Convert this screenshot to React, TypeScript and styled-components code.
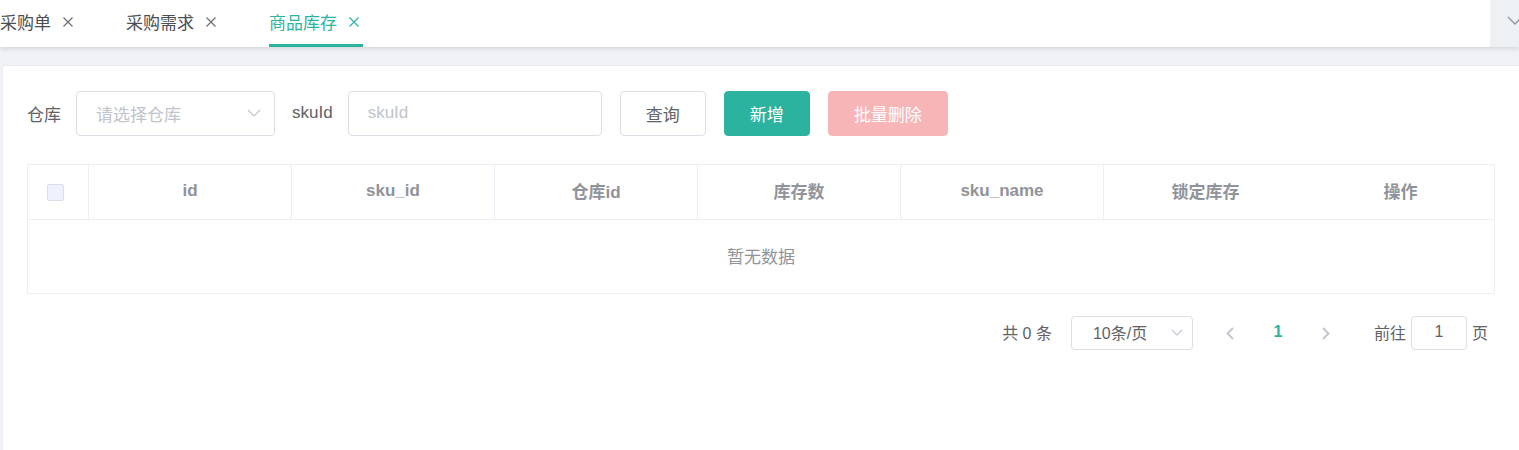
import React from "react";
import styled, { createGlobalStyle, css } from "styled-components";

const TEAL = "#2bb3a0";

const GlobalStyle = createGlobalStyle`
  html, body {
    margin: 0;
    padding: 0;
    height: 100%;
    overflow: hidden;
  }
  body {
    font-family: "Liberation Sans", "Noto Sans CJK SC", sans-serif;
    color: #606266;
    background: #f0f2f5;
  }
  #root { height: 100%; }
  * { box-sizing: border-box; }
`;

const Page = styled.div`
  height: 100vh;
  display: flex;
  flex-direction: column;
  background: #f0f2f5;
`;

const TabBar = styled.div`
  height: 47px;
  flex: none;
  display: flex;
  background: #fff;
  box-shadow: 0 2px 5px rgba(0, 0, 0, 0.12);
  position: relative;
  z-index: 1;
`;

const TabList = styled.div`
  flex: 1;
  display: flex;
  overflow: hidden;
`;

const Tab = styled.div<{ $active?: boolean }>`
  position: relative;
  height: 47px;
  display: flex;
  align-items: center;
  gap: 10px;
  padding: 0 2px 4px 0;
  margin-right: 49px;
  font-size: 17px;
  white-space: nowrap;
  color: ${(p) => (p.$active ? TEAL : "#4a4d52")};
  ${(p) =>
    p.$active &&
    css`
      &::after {
        content: "";
        position: absolute;
        left: 0;
        right: 0;
        bottom: 0;
        height: 3px;
        background: ${TEAL};
      }
    `}
`;

const CloseBox = styled.span`
  width: 14px;
  height: 14px;
  display: flex;
  align-items: center;
  padding-left: 2px;
`;

const DropButton = styled.div`
  width: 29px;
  flex: none;
  height: 47px;
  background: #eef1f3;
  overflow: hidden;
  display: flex;
  align-items: center;
  padding: 0 0 6px 17px;
  & svg { flex: none; }
`;

const Main = styled.div`
  flex: 1;
  padding: 18px 0 0 2px;
  display: flex;
  min-height: 0;
`;

const Card = styled.div`
  flex: 1;
  background: #fff;
  border: 1px solid #e9ecf1;
  border-right: none;
  border-bottom: none;
  border-radius: 4px 0 0 0;
  padding: 25px 24px 0 24px;
`;

const Form = styled.div`
  display: flex;
  align-items: center;
  height: 45px;
`;

const Label = styled.span`
  font-size: 17px;
  color: #606266;
  margin-right: 15px;
  padding-bottom: 1px;
  white-space: nowrap;
`;

const Field = styled.div<{ $width: number; $gapRight: number }>`
  width: ${(p) => p.$width}px;
  height: 45px;
  border: 1px solid #dcdfe6;
  border-radius: 4px;
  display: flex;
  align-items: center;
  justify-content: space-between;
  padding: 0 13px 1px 19px;
  margin-right: ${(p) => p.$gapRight}px;
  font-size: 17px;
  color: #c0c4cc;
  flex: none;
`;

type BtnKind = "default" | "primary" | "danger";

const Button = styled.button<{ $kind: BtnKind }>`
  height: 45px;
  padding: 0 25px 1px;
  border-radius: 4px;
  font-family: inherit;
  font-size: 17px;
  margin-right: 18px;
  white-space: nowrap;
  cursor: pointer;
  ${(p) =>
    p.$kind === "default"
      ? css`
          background: #fff;
          border: 1px solid #dcdfe6;
          color: #606266;
        `
      : p.$kind === "primary"
      ? css`
          background: ${TEAL};
          border: 1px solid ${TEAL};
          color: #fff;
        `
      : css`
          background: #f8b5b7;
          border: 1px solid #f8b5b7;
          color: #fff;
          cursor: not-allowed;
        `}
`;

const Table = styled.div`
  margin-top: 28px;
  border: 1px solid #ebeef5;
`;

const HeaderRow = styled.div`
  display: grid;
  grid-template-columns: 61px repeat(6, 1fr) 187px;
  height: 55px;
  border-bottom: 1px solid #ebeef5;
`;

const HeadCell = styled.div<{ $noBorder?: boolean }>`
  display: flex;
  align-items: center;
  justify-content: center;
  padding-bottom: 3px;
  font-size: 17px;
  font-weight: bold;
  color: #909399;
  border-right: ${(p) => (p.$noBorder ? "none" : "1px solid #ebeef5")};
`;

const CheckCell = styled(HeadCell)`
  justify-content: flex-start;
  padding: 0 0 0 19px;
`;

const Checkbox = styled.span`
  width: 17px;
  height: 17px;
  border: 1px solid #dcdfe6;
  border-radius: 2px;
  background: #edf2fc;
`;

const EmptyBody = styled.div`
  height: 73px;
  display: flex;
  align-items: center;
  justify-content: center;
  padding-bottom: 2px;
  font-size: 17px;
  color: #909399;
`;

const Pagination = styled.div`
  margin-top: 22px;
  display: flex;
  justify-content: flex-end;
  align-items: center;
  height: 34px;
  padding-right: 7px;
  font-size: 16px;
  color: #606266;
`;

const Total = styled.span`
  margin-right: 19px;
  padding-bottom: 3px;
  white-space: pre;
`;

const SizeSelect = styled.div`
  width: 122px;
  height: 34px;
  border: 1px solid #dcdfe6;
  border-radius: 4px;
  display: flex;
  align-items: center;
  justify-content: space-between;
  padding: 0 9px 2px 21px;
  margin-right: 18px;
  color: #606266;
`;

const PagerBtn = styled.div<{ $active?: boolean }>`
  width: 38px;
  height: 34px;
  display: flex;
  align-items: center;
  justify-content: center;
  margin-right: 10px;
  padding-bottom: ${(p) => (p.$active ? "2px" : "0")};
  font-weight: bold;
  color: ${(p) => (p.$active ? TEAL : "#c0c4cc")};
  &:last-of-type { margin-right: 0; }
`;

const Jump = styled.div`
  display: flex;
  align-items: center;
  gap: 5px;
  margin-left: 19px;
  & > span { padding-bottom: 3px; }
`;

const JumpInput = styled.div`
  width: 56px;
  height: 34px;
  border: 1px solid #dcdfe6;
  border-radius: 4px;
  display: flex;
  align-items: center;
  justify-content: center;
  padding-bottom: 2px;
`;

const CloseIcon = ({ color }: { color: string }) => (
  <svg width="10" height="10" viewBox="0 0 10 10">
    <path d="M0.5 0.5 L9.5 9.5 M9.5 0.5 L0.5 9.5" stroke={color} strokeWidth="1.2" fill="none" />
  </svg>
);

const ChevronDown = ({ w, h, color, sw }: { w: number; h: number; color: string; sw: number }) => (
  <svg width={w} height={h} viewBox={`0 0 ${w} ${h}`}>
    <path d={`M1 1 L${w / 2} ${h - 1} L${w - 1} 1`} stroke={color} strokeWidth={sw} fill="none" />
  </svg>
);

const Chevron = ({ dir }: { dir: "left" | "right" }) => (
  <svg width="8" height="13" viewBox="0 0 8 13">
    <path
      d={dir === "left" ? "M7 1 L1.5 6.5 L7 12" : "M1 1 L6.5 6.5 L1 12"}
      stroke="#c0c4cc"
      strokeWidth="1.8"
      fill="none"
    />
  </svg>
);

const tabs = [
  { label: "采购单", active: false },
  { label: "采购需求", active: false },
  { label: "商品库存", active: true },
];

const columns = ["id", "sku_id", "仓库id", "库存数", "sku_name", "锁定库存", "操作"];

export default function App() {
  return (
    <>
      <GlobalStyle />
      <Page>
        <TabBar>
          <TabList>
            {tabs.map((t) => (
              <Tab key={t.label} $active={t.active}>
                <span>{t.label}</span>
                <CloseBox>
                  <CloseIcon color={t.active ? TEAL : "#6b6e73"} />
                </CloseBox>
              </Tab>
            ))}
          </TabList>
          <DropButton>
            <ChevronDown w={16} h={9} color="#8a97a8" sw={1.3} />
          </DropButton>
        </TabBar>
        <Main>
          <Card>
            <Form>
              <Label>仓库</Label>
              <Field $width={199} $gapRight={17}>
                <span>请选择仓库</span>
                <ChevronDown w={14} h={8} color="#c0c4cc" sw={1.2} />
              </Field>
              <Label>skuId</Label>
              <Field $width={254} $gapRight={18}>
                <span>skuId</span>
              </Field>
              <Button $kind="default">查询</Button>
              <Button $kind="primary">新增</Button>
              <Button $kind="danger" disabled>
                批量删除
              </Button>
            </Form>
            <Table>
              <HeaderRow>
                <CheckCell>
                  <Checkbox />
                </CheckCell>
                {columns.map((c, i) => (
                  <HeadCell key={c} $noBorder={i >= columns.length - 2}>
                    {c}
                  </HeadCell>
                ))}
              </HeaderRow>
              <EmptyBody>暂无数据</EmptyBody>
            </Table>
            <Pagination>
              <Total>共 0 条</Total>
              <SizeSelect>
                <span>10条/页</span>
                <ChevronDown w={12} h={7} color="#c0c4cc" sw={1.1} />
              </SizeSelect>
              <PagerBtn>
                <Chevron dir="left" />
              </PagerBtn>
              <PagerBtn $active>1</PagerBtn>
              <PagerBtn>
                <Chevron dir="right" />
              </PagerBtn>
              <Jump>
                <span>前往</span>
                <JumpInput>1</JumpInput>
                <span>页</span>
              </Jump>
            </Pagination>
          </Card>
        </Main>
      </Page>
    </>
  );
}
